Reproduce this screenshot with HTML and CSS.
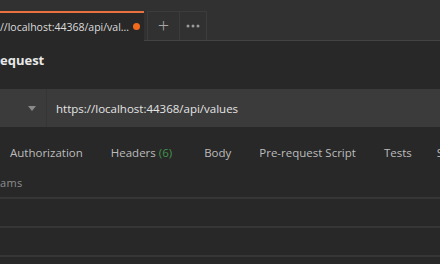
FILE: index.html
```html
<!DOCTYPE html>
<html lang="en">

<head>
  <meta charset="UTF-8">
  <meta name="viewport" content="width=device-width, initial-scale=1.0">
  <title>Postman</title>
  <link rel="stylesheet" href="styles.css">
</head>

<body>
  <div class="tabbar">
    <div class="tab active">
      <span class="tab-name">//localhost:44368/api/val...</span>
      <span class="dot"></span>
    </div>
    <div class="tab-btn plus">+</div>
    <div class="tab-btn more">
      <svg width="14" height="4" viewBox="0 0 14 4">
        <circle cx="2" cy="2" r="1.5" fill="#9a9a9a" />
        <circle cx="7" cy="2" r="1.5" fill="#9a9a9a" />
        <circle cx="12" cy="2" r="1.5" fill="#9a9a9a" />
      </svg>
    </div>
  </div>

  <div class="title">equest</div>

  <div class="urlbar">
    <div class="method">
      <svg width="8" height="5" viewBox="0 0 8 5">
        <path d="M0 0 L8 0 L4 5 Z" fill="#8a8a8a" />
      </svg>
    </div>
    <div class="url">https://localhost:44368/api/values</div>
  </div>

  <ul class="req-tabs">
    <li>Authorization</li>
    <li>Headers <span class="count">(6)</span></li>
    <li>Body</li>
    <li>Pre-request Script</li>
    <li>Tests</li>
    <li>S</li>
  </ul>

  <div class="section">ams</div>

  <div class="rows">
    <div class="row"></div>
    <div class="row"></div>
    <div class="row last"></div>
  </div>
</body>

</html>
```

FILE: styles.css
```css
* {
  box-sizing: border-box;
}

body {
  margin: 0;
  width: 440px;
  height: 264px;
  overflow: hidden;
  background-color: #282828;
  font-family: "Open Sans", "DejaVu Sans", sans-serif;
  color: #d0d0d0;
}

.tabbar {
  height: 41px;
  background-color: #313131;
  border-bottom: 1px solid #444;
  display: flex;
  align-items: flex-end;
}

.tab {
  height: 29px;
  display: flex;
  align-items: center;
}

.tab.active {
  width: 144px;
  background-color: #282828;
  border-top: 2px solid #e9703f;
  margin-bottom: -1px;
  height: 30px;
  padding-bottom: 1px;
}

.tab-name {
  font-size: 10.5px;
  color: #dcdcdc;
  white-space: nowrap;
}

.dot {
  width: 7px;
  height: 7px;
  border-radius: 50%;
  background-color: #f26b1d;
  margin-left: 4px;
}

.tab-btn {
  height: 29px;
  display: flex;
  align-items: center;
  justify-content: center;
  border: 1px solid #3c3c3c;
  border-bottom: none;
  color: #a8a8a8;
}

.plus {
  width: 33px;
  margin-left: 3px;
  font-size: 20px;
  font-weight: 300;
  padding-bottom: 2px;
}

.more {
  width: 27px;
  border-left: none;
}

.title {
  height: 39px;
  line-height: 38px;
  font-size: 13px;
  font-weight: bold;
  color: #e8e8e8;
}

.urlbar {
  height: 38px;
  margin-top: 9px;
  background-color: #3b3b3b;
  display: flex;
  align-items: center;
}

.method {
  width: 47px;
  height: 100%;
  border-right: 1px solid #353535;
  display: flex;
  align-items: center;
  padding-left: 28px;
}

.url {
  padding-left: 9px;
  font-size: 11.5px;
  color: #e4e4e4;
}

.req-tabs {
  margin: 0;
  padding: 0;
  height: 50px;
  display: flex;
  align-items: center;
  white-space: nowrap;
  list-style: none;
}

.req-tabs li {
  font-size: 11.5px;
  color: #bcbcbc;
  padding: 0 14px;
}

.req-tabs li:first-child {
  padding-left: 10px;
}

.req-tabs li:nth-child(3) {
  padding-left: 18px;
}

.req-tabs li:last-child {
  padding-left: 11px;
}

.count {
  color: #43934c;
}

.section {
  height: 20px;
  font-size: 11px;
  color: #8e8e8e;
  letter-spacing: 0.3px;
  line-height: 12px;
}

.rows {
  display: flex;
  flex-direction: column;
}

.row {
  height: 29px;
  border-top: 2px solid #363636;
}

.row.last {
  height: 10px;
}
```
